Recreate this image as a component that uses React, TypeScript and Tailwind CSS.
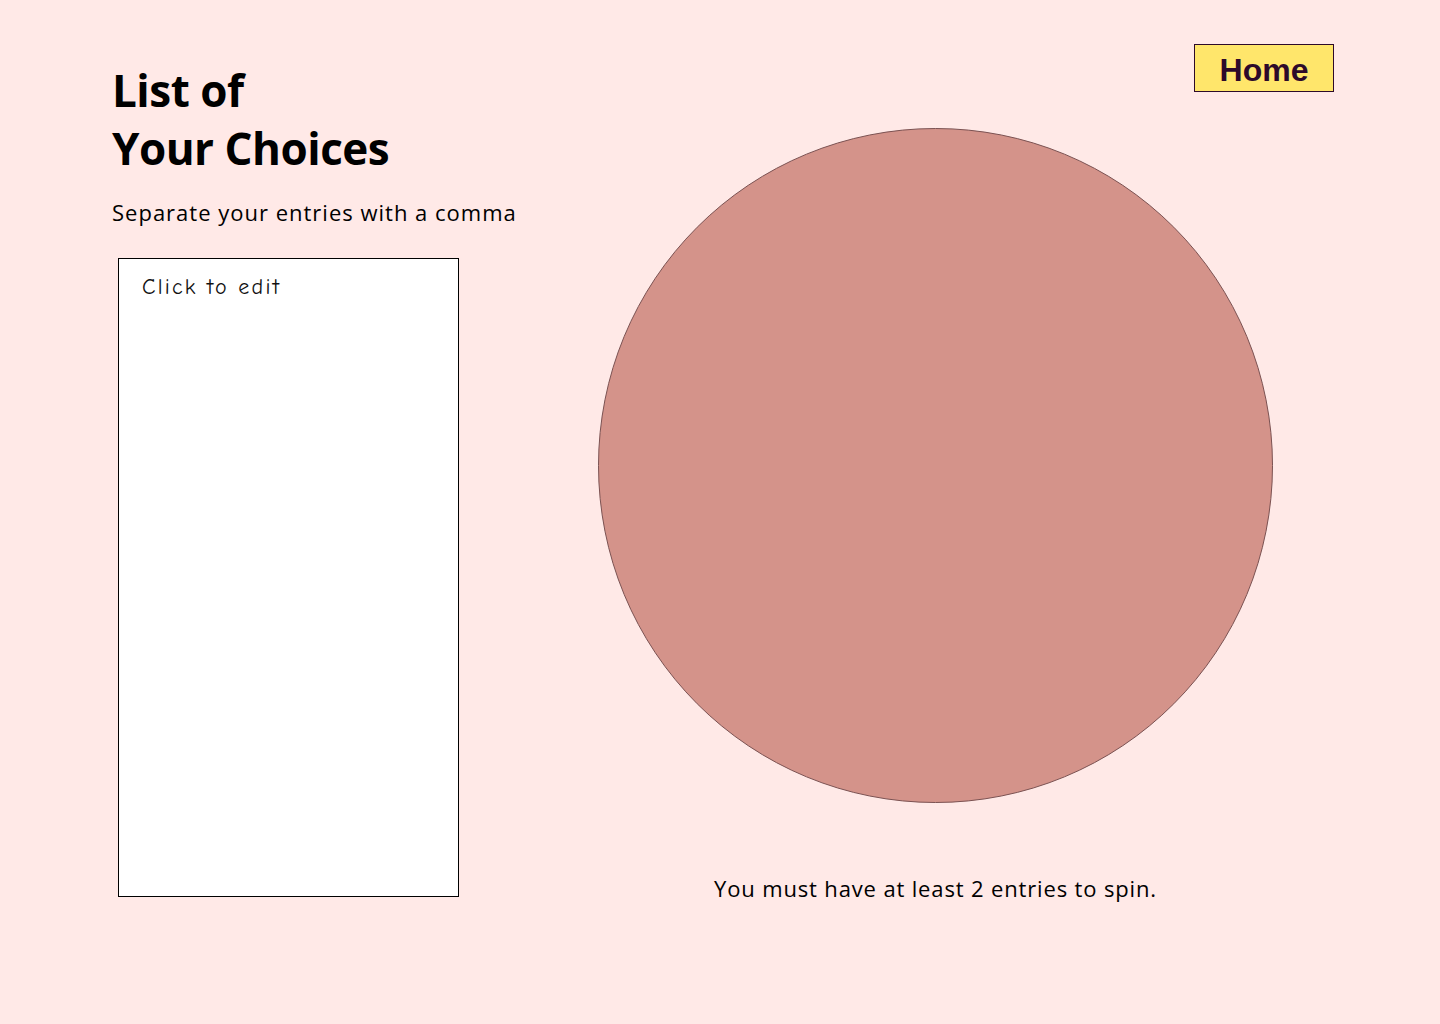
import React from 'react';

const App: React.FC = () => {
  return (
    <div className="min-h-[1024px] w-full bg-[#ffe9e7] font-['Open_Sans',sans-serif] text-black">
      <div className="flex pl-[112px] pt-[44px]">
        {/* Left column */}
        <div className="w-[486px] shrink-0">
          <h1 className="mt-[17px] text-[44px] font-bold leading-[58px] tracking-[-0.5px]">
            List of
            <br />
            Your Choices
          </h1>
          <p className="mt-[20px] text-[22px] leading-[30px] tracking-[1px]">Separate your entries with a comma</p>
          <div className="ml-[6px] mt-[31px] h-[639px] w-[341px] border border-black bg-white px-[23px] pt-[12px]">
            <span className="font-['Comic_Neue','DejaVu_Sans',cursive] text-[22px] tracking-[2.2px] text-[#111]">Click to edit</span>
          </div>
        </div>

        {/* Right column */}
        <div className="flex w-[736px] flex-col">
          <button className="h-[48px] w-[140px] self-end border border-[#2d0a2a] bg-[#ffe66b] pt-[3px] font-['Liberation_Sans',Arial,sans-serif] text-[32px] font-bold leading-none text-[#2d0a2a]">
            Home
          </button>
          <div className="mt-[36px] flex w-[675px] flex-col items-center">
            <div className="h-[675px] w-[675px] rounded-full border border-[#7b5252] bg-[#d4938a]" />
            <p className="mt-[70px] text-[22px] leading-[30px] tracking-[0.85px]">You must have at least 2 entries to spin.</p>
          </div>
        </div>
      </div>
    </div>
  );
};

export default App;
